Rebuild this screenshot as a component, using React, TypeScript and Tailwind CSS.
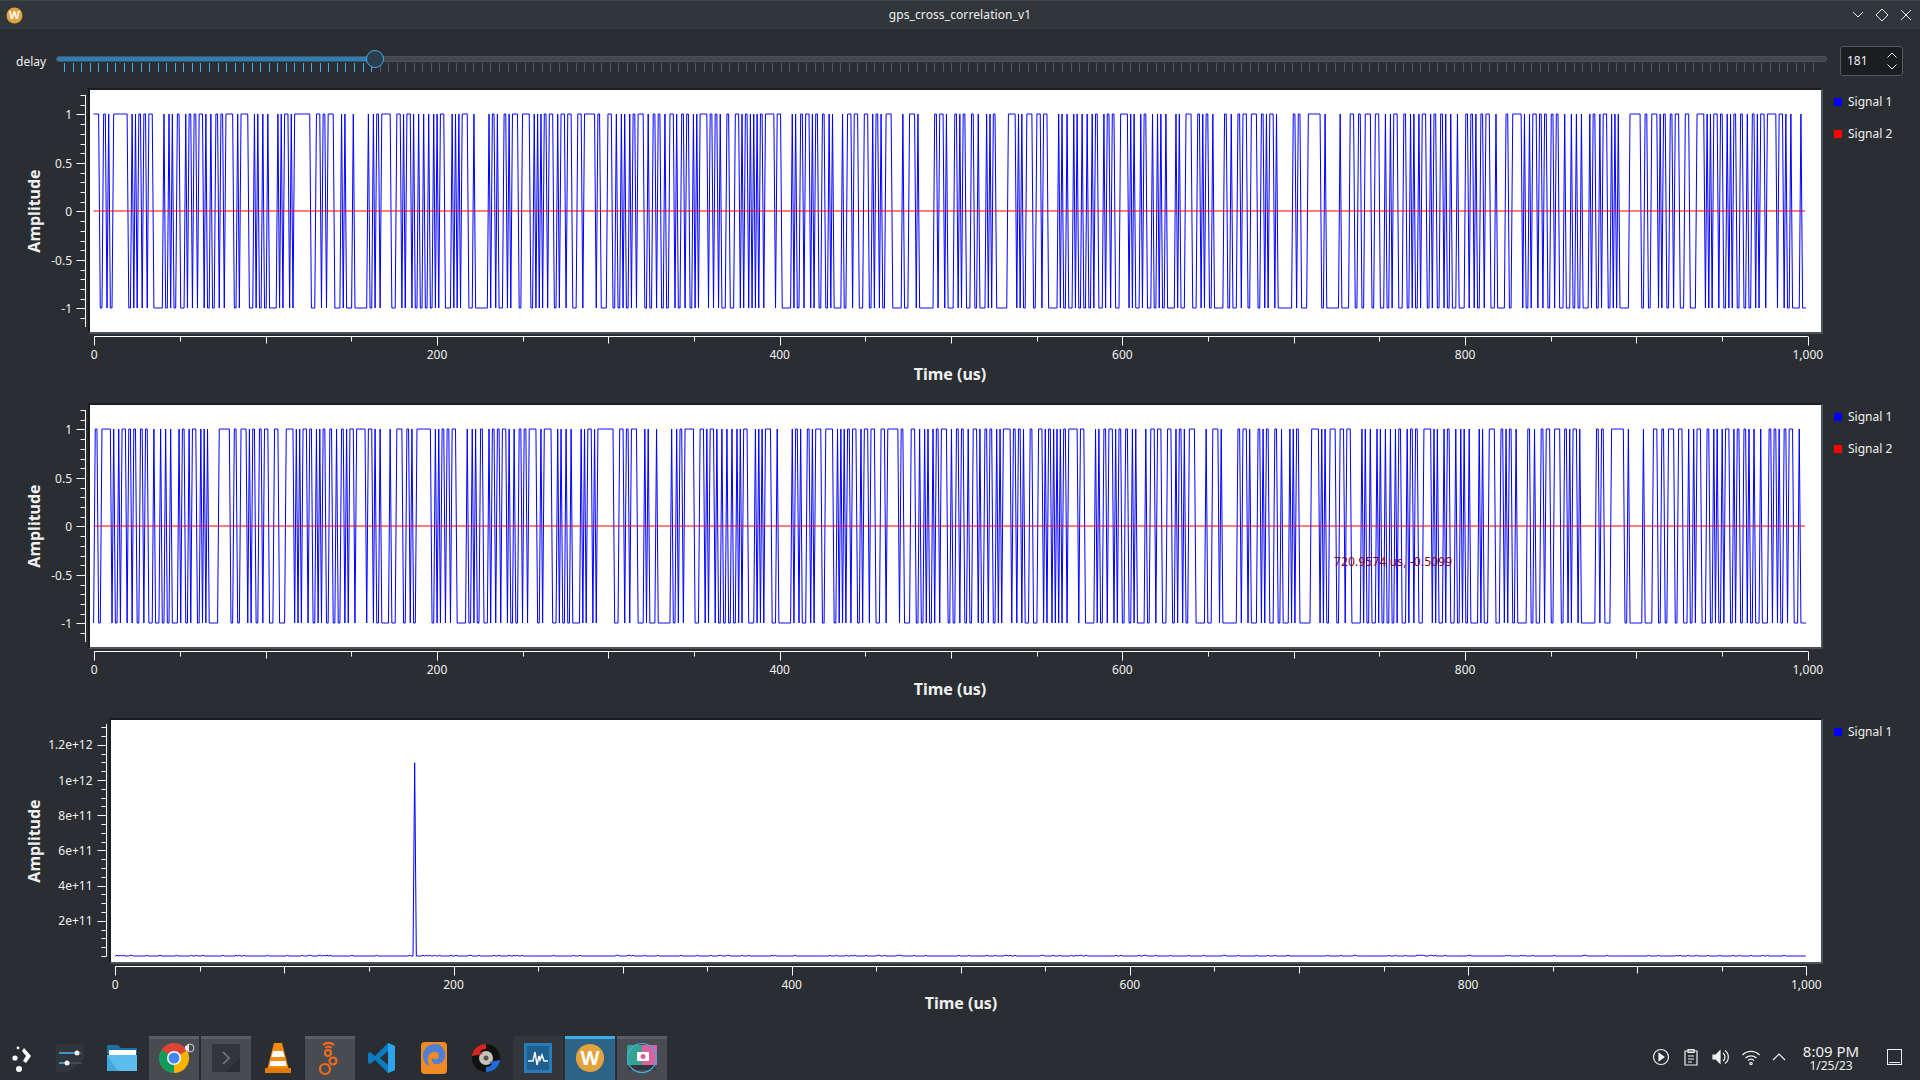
import type { ReactNode } from 'react';

// GPS C/A code for PRN 20 (G2 taps 4 and 7), one full 1023 chip period
function caCode(t1: number, t2: number) {
  let g1 = Array(10).fill(1) as number[];
  let g2 = Array(10).fill(1) as number[];
  const out: number[] = [];
  for (let i = 0; i < 1023; i++) {
    out.push(g1[9] ^ g2[t1 - 1] ^ g2[t2 - 1]);
    const f1 = g1[2] ^ g1[9];
    const f2 = g2[1] ^ g2[2] ^ g2[5] ^ g2[7] ^ g2[8] ^ g2[9];
    g1 = [f1, ...g1.slice(0, 9)];
    g2 = [f2, ...g2.slice(0, 9)];
  }
  return out;
}

const DELAY = 181;
const bits = caCode(4, 7);
const delayed = bits.map((_, i) => bits[(i - DELAY + 1023) % 1023]);

let seed = 7;
const rnd = () => {
  seed = (seed * 1664525 + 1013904223) >>> 0;
  return seed / 4294967296;
};

const toPoints = (b: number[]) =>
  b.map((v, i) => `${(3.6 + i * 1.6755).toFixed(2)},${v ? 24 : 218}`).join(' ');

const corrPoints = Array.from({ length: 1023 }, (_, i) => {
  const y = i === DELAY ? 42.8 : 236 + (rnd() > 0.85 ? -0.7 : 0);
  return `${(4.3 + i * 1.654).toFixed(2)},${y}`;
}).join(' ');

const range = (n: number) => Array.from({ length: n }, (_, i) => i);

function XAxis({ x0, pxPerUs, titleX, titleY }: { x0: number; pxPerUs: number; titleX: number; titleY: number }) {
  return (
    <svg width="100%" height={69} className="block">
      <line x1={x0} x2={x0 + 1000 * pxPerUs} y1={2.5} y2={2.5} stroke="#fff" />
      {range(21).map((i) => {
        const x = Math.round(x0 + i * 50 * pxPerUs) + 0.5;
        const len = i % 4 === 0 ? 9 : i % 2 === 0 ? 7 : 5;
        return <line key={i} x1={x} x2={x} y1={2.5} y2={2.5 + len} stroke="#fff" />;
      })}
      {range(6).map((i) => (
        <text key={i} x={x0 + i * 200 * pxPerUs} y={25} textAnchor="middle" fontSize={12} fill="#eff0f1">
          {i === 5 ? '1,000' : i * 200}
        </text>
      ))}
      <text x={titleX} y={titleY} textAnchor="middle" fontSize={16} fontWeight={700} fill="#eff0f1">
        Time (us)
      </text>
    </svg>
  );
}

function YAxis({
  width, axisX, top, bottom, labelX, ticks, minors,
}: {
  width: number; axisX: number; top: number; bottom: number; labelX: number;
  ticks: { y: number; label: string }[]; minors: number[];
}) {
  return (
    <svg width={width} height={246} className="block shrink-0">
      <line x1={axisX} x2={axisX} y1={top} y2={bottom} stroke="#fff" />
      {minors.map((y) => (
        <line key={y} x1={axisX - 5} x2={axisX} y1={Math.round(y) + 0.5} y2={Math.round(y) + 0.5} stroke="#fff" />
      ))}
      {ticks.map((t) => (
        <g key={t.label}>
          <line x1={axisX - 9} x2={axisX} y1={Math.round(t.y) + 0.5} y2={Math.round(t.y) + 0.5} stroke="#fff" />
          <text x={labelX} y={t.y + 4.5} textAnchor="end" fontSize={12} fill="#eff0f1">{t.label}</text>
        </g>
      ))}
      <text transform="translate(39.5 123) rotate(-90)" textAnchor="middle" fontSize={16} fontWeight={700} fill="#eff0f1">
        Amplitude
      </text>
    </svg>
  );
}

function Legend({ signals }: { signals: { name: string; color: string }[] }) {
  return (
    <ul className="flex w-[97px] shrink-0 flex-col gap-[16px] pt-[6px] pl-[11px] text-[12px] leading-[16px] text-[#eff0f1]">
      {signals.map((s) => (
        <li key={s.name} className="flex items-center gap-[6px]">
          <span className={`size-[8px] ${s.color}`} />
          {s.name}
        </li>
      ))}
    </ul>
  );
}

const ampTicks = [
  { y: 26, label: '1' }, { y: 75, label: '0.5' }, { y: 123, label: '0' }, { y: 172, label: '-0.5' }, { y: 220, label: '-1' },
];
const ampMinors = range(24).map((i) => 7 + i * 9.7).filter((y) => y < 239);

function SignalPlot({ data, children }: { data: number[]; children?: ReactNode }) {
  return (
    <section className="flex h-[315px]">
      <YAxis width={88} axisX={85.5} top={7} bottom={239} labelX={72} ticks={ampTicks} minors={ampMinors} />
      <div className="flex-1">
        <div className="relative h-[246px] border-2 border-t-[#1b1e20] border-r-[#4d5257] border-b-[#4d5257] border-l-[#1b1e20] bg-white">
          <svg width="100%" height="100%" className="block">
            <polyline points={toPoints(data)} fill="none" stroke="#0000ff" strokeWidth={1} />
            <line x1={3.6} x2={1715} y1={121} y2={121} stroke="#ff0000" strokeWidth={1} />
          </svg>
          {children}
        </div>
        <XAxis x0={6.3} pxPerUs={1.7135} titleX={862} titleY={46} />
      </div>
      <Legend signals={[{ name: 'Signal 1', color: 'bg-[#0000ff]' }, { name: 'Signal 2', color: 'bg-[#ff0000]' }]} />
    </section>
  );
}

function CorrelationPlot() {
  const ticks = ['2e+11', '4e+11', '6e+11', '8e+11', '1e+12', '1.2e+12'];
  return (
    <section className="flex h-[315px]">
      <YAxis
        width={109}
        axisX={106.5}
        top={6}
        bottom={238}
        labelX={92.5}
        ticks={ticks.map((label, i) => ({ y: 202.8 - i * 35.2, label }))}
        minors={range(27).map((i) => 238 - i * 8.8).filter((y) => y > 6)}
      />
      <div className="flex-1">
        <div className="h-[246px] border-2 border-t-[#1b1e20] border-r-[#4d5257] border-b-[#4d5257] border-l-[#1b1e20] bg-white">
          <svg width="100%" height="100%" className="block">
            <polyline points={corrPoints} fill="none" stroke="#0000ff" strokeWidth={1} />
          </svg>
        </div>
        <XAxis x0={6.3} pxPerUs={1.691} titleX={852} titleY={45} />
      </div>
      <Legend signals={[{ name: 'Signal 1', color: 'bg-[#0000ff]' }]} />
    </section>
  );
}

function Slider() {
  const ticks = range(206);
  return (
    <div className="relative h-[30px] flex-1">
      <div className="mt-[10px] flex h-[6px] overflow-hidden rounded-full border border-[#4d5257] bg-[#43474b]">
        <div className="h-full w-[319px] bg-[#2980b9]" />
      </div>
      <svg width="100%" height={9} className="mt-[1px] block">
        {ticks.map((i) => {
          const x = Math.round(8 + i * 8.53) + 0.5;
          return <line key={i} x1={x} x2={x} y1={0} y2={9} stroke={x < 319 ? '#3daee9' : '#54585c'} />;
        })}
      </svg>
      <span className="absolute top-[4px] left-[310px] size-[18px] rounded-full border border-[#3daee9] bg-[#2a3e4c]" />
    </div>
  );
}

function SpinBox() {
  return (
    <div className="ml-[13px] flex h-[30px] w-[63px] items-center justify-between rounded-[3px] border border-[#565a5e] bg-[#1b1e20] pr-[4px] pl-[6px] text-[12px] text-[#eff0f1]">
      181
      <svg width="12" height="22" viewBox="0 0 12 22" fill="none" stroke="#eff0f1">
        <path d="M1.500 7.500L6 3l4.500 4.500M1.500 14.500L6 19l4.500-4.500" />
      </svg>
    </div>
  );
}

function WLogo({ size }: { size: number }) {
  return (
    <svg width={size} height={size} viewBox="0 0 32 32">
      <circle cx="16" cy="16" r="15" fill="#e4a23c" />
      <text x="16" y="23.5" textAnchor="middle" fontSize="21" fontWeight="700" fill="#fff">W</text>
    </svg>
  );
}

const icons: { bg: string; icon: ReactNode; width?: string }[] = [
  {
    bg: '', width: 'w-[43px]',
    icon: (
      <svg width="28" height="28" viewBox="0 0 28 28" fill="#fff">
        <circle cx="7" cy="14" r="2.6" /><circle cx="10" cy="4" r="1.4" /><circle cx="11" cy="25" r="3" />
        <path d="M16 4l7 8-5 7-3-2 3-5-4-5z" />
      </svg>
    ),
  },
  {
    bg: '',
    icon: (
      <svg width="28" height="28" viewBox="0 0 28 28">
        <rect width="28" height="28" fill="#31363b" />
        <path d="M14 28L28 14v14z" fill="#2a2e32" />
        <path d="M3 9h23M3 19h23" stroke="#5a5e62" />
        <path d="M3 9h18M3 19h9" stroke="#3daee9" strokeWidth="1.5" />
        <circle cx="21" cy="9" r="2.5" fill="#eff0f1" /><circle cx="11" cy="19" r="2.5" fill="#eff0f1" />
      </svg>
    ),
  },
  {
    bg: '',
    icon: (
      <svg width="32" height="28" viewBox="0 0 32 28">
        <path d="M1 2a1 1 0 011-1h10l3 3h16v6H1z" fill="#1b6fa3" />
        <rect x="3" y="6" width="27" height="6" fill="#fff" />
        <path d="M1 11h30v16H1z" fill="#3fa9dd" />
        <path d="M1 11h30v16H12z" fill="#5cbcec" />
      </svg>
    ),
  },
  {
    bg: 'bg-[#484b4f] border-t-[#5a5d61]',
    icon: (
      <svg width="32" height="32" viewBox="-1 0 32 32" className="overflow-visible">
        <circle cx="15" cy="16" r="15" fill="#db4437" />
        <path d="M15 16L2 23.5A15 15 0 0 0 15 31z" fill="#0f9d58" />
        <path d="M2 23.5A15 15 0 0 1 2.5 8L15 16z" fill="#0f9d58" />
        <path d="M15 31a15 15 0 0 0 13-22.500L15 16z" fill="#f4b400" />
        <circle cx="15" cy="16" r="7" fill="#fff" /><circle cx="15" cy="16" r="5.500" fill="#4285f4" />
        <circle cx="31" cy="6" r="4" fill="none" stroke="#d0d0d0" /><path d="M26 4h2l2-2v8l-2-2h-2z" fill="#eee" />
      </svg>
    ),
  },
  {
    bg: 'bg-[#484b4f] border-t-[#5a5d61]',
    icon: (
      <svg width="28" height="28" viewBox="0 0 28 28">
        <rect width="28" height="28" fill="#31363b" />
        <path d="M14 28L28 14v14z" fill="#2a2e32" />
        <path d="M11 8l6 6-6 6" fill="none" stroke="#777b7f" strokeWidth="1.500" />
      </svg>
    ),
  },
  {
    bg: '',
    icon: (
      <svg width="26" height="32" viewBox="0 0 26 32">
        <path d="M9 1h8l7 27H2z" fill="#f48b12" />
        <path d="M8 9h10l1.500 6h-13zM5.500 19h15l1 5h-17z" fill="#fff" />
        <rect x="0" y="26" width="26" height="5" fill="#e27a08" />
      </svg>
    ),
  },
  {
    bg: 'bg-[#484b4f] border-t-[#5a5d61]',
    icon: (
      <svg width="24" height="36" viewBox="0 0 24 36" fill="none" stroke="#f26b1d" strokeWidth="2.200">
        <path d="M5 5a8 8 0 0 1 11 0M7.500 8a4 4 0 0 1 6 0" />
        <circle cx="10" cy="13" r="3" /><circle cx="15" cy="21" r="3.500" /><circle cx="7" cy="29" r="5" />
      </svg>
    ),
  },
  {
    bg: '',
    icon: (
      <svg width="28" height="32" viewBox="0 0 28 32">
        <path d="M20 1l7 3v24l-7 3L7 18l-5 4-2-1.500V11.500L2 10l5 4z" fill="#0a7cc1" />
        <path d="M20 1l7 3v24l-7 3z" fill="#2ba4ec" />
        <path d="M20 9l-8 7 8 7z" fill="#2a2e32" />
      </svg>
    ),
  },
  {
    bg: '',
    icon: (
      <svg width="26" height="32" viewBox="0 0 26 32">
        <rect width="26" height="32" rx="4" fill="#f08a24" />
        <path d="M16 2C7 1 2 7 2 14c0 5 3 9 7 10-2-3-3-6-2-9 1-4 5-6 8-5 3 1 4 5 1 7-2 1-4 0-5-1-1 4 2 7 6 6 5-1 8-6 7-11-1-5-4-8-8-9z" fill="#4f7fd6" />
      </svg>
    ),
  },
  {
    bg: '',
    icon: (
      <svg width="30" height="32" viewBox="0 0 30 32">
        <circle cx="15" cy="16" r="14" fill="#111" />
        <circle cx="15" cy="16" r="7" fill="#c9c4b8" /><circle cx="15" cy="16" r="2.500" fill="#555" />
        <path d="M1 13C3 6 8 2 15 2v5c-3 0-5 1-6 3l3 2-11 2z" fill="#d8251f" />
        <path d="M29 19c-2 7-7 11-14 11v-5c3 0 5-1 6-3l-3-2 11-2z" fill="#2469d8" />
      </svg>
    ),
  },
  {
    bg: 'bg-[#33363a]',
    icon: (
      <svg width="28" height="32" viewBox="0 0 28 32">
        <rect y="1" width="28" height="30" fill="#2a7ab8" />
        <rect x="3" y="4" width="22" height="24" fill="#1f5f8f" />
        <path d="M4 19h5l2-9 2 13 2-9 1 4 2-5 2 6h4" fill="none" stroke="#f4f6f8" strokeWidth="1.500" />
      </svg>
    ),
  },
  { bg: 'bg-[#2d6386] border-t-[#3daee9]', icon: <WLogo size={30} /> },
  {
    bg: 'bg-[#484b4f] border-t-[#5a5d61]',
    icon: (
      <svg width="32" height="32" viewBox="0 0 32 32">
        <rect x="1" y="3" width="30" height="20" fill="#37a18f" />
        <path d="M16 3h15v20H16z" fill="#d9629d" />
        <rect x="11" y="10" width="12" height="9" rx="1" fill="#fff" /><circle cx="17" cy="14.500" r="2.500" fill="#d9629d" />
        <path d="M4 23h24l2 5H2z" fill="#33363a" />
        <circle cx="16" cy="16" r="14.500" fill="none" stroke="#3daee9" strokeWidth="1.200" />
      </svg>
    ),
  },
];

function TrayIcon({ children }: { children: ReactNode }) {
  return (
    <span className="flex w-[30px] justify-center">
      <svg width="20" height="20" viewBox="0 0 20 20" fill="none" stroke="currentColor" strokeWidth="1.200">
        {children}
      </svg>
    </span>
  );
}

function Taskbar() {
  return (
    <footer className="flex h-[47px] items-end gap-[2px]">
      {icons.map((it, i) => (
        <div
          key={i}
          className={`flex h-[44px] items-center justify-center border-t-[3px] border-transparent pb-[3px] ${it.width ?? 'w-[50px]'} ${it.bg}`}
        >
          {it.icon}
        </div>
      ))}
      <div className="ml-auto flex h-[44px] items-center pb-[3px] text-[#eff0f1]">
        <TrayIcon>
          <circle cx="10" cy="10" r="7.500" /><path d="M8 6.500l5 3.500-5 3.500z" fill="currentColor" />
        </TrayIcon>
        <TrayIcon>
          <path d="M4 4h12v14H4zM7 2.500h6v3H7zM7 9h6M7 12h6M7 15h4" />
        </TrayIcon>
        <TrayIcon>
          <path d="M2 8h3l4-4v12l-4-4H2z" fill="currentColor" /><path d="M12 6a5 5 0 0 1 0 8M14 3.500a8 8 0 0 1 0 13" />
        </TrayIcon>
        <TrayIcon>
          <path d="M1.500 8a12 12 0 0 1 17 0M4.500 11a8 8 0 0 1 11 0M7 13.500a4 4 0 0 1 6 0" /><circle cx="10" cy="16.500" r="1.200" />
        </TrayIcon>
        <span className="-ml-[2px]">
          <TrayIcon>
            <path d="M4 13l6-6 6 6" />
          </TrayIcon>
        </span>
        <div className="ml-[6px] flex w-[62px] flex-col items-center pt-[1px] text-[#eff0f1]">
          <span className="text-[15px] leading-[16px]">8:09 PM</span>
          <span className="text-[12px] leading-[13px]">1/25/23</span>
        </div>
        <div className="mr-[18px] ml-[25px] flex h-[16px] w-[15px] items-end border border-[#eff0f1] p-[1px]">
          <span className="h-px w-full bg-[#eff0f1]" />
        </div>
      </div>
    </footer>
  );
}

export default function App() {
  return (
    <div className="flex h-[1080px] w-[1920px] flex-col overflow-hidden bg-[#2a2e32] font-['Noto_Sans',sans-serif]">
      <header className="relative flex h-[29px] items-center justify-between border-t border-[#3f4449] bg-[#31363b] px-[6px]">
        <WLogo size={17} />
        <span className="absolute inset-x-0 text-center text-[12px] tracking-[0.1px] text-[#eff0f1]">gps_cross_correlation_v1</span>
        <svg width="64" height="16" viewBox="0 0 64 16" fill="none" stroke="#eff0f1" className="relative">
          <path d="M3 5l5 5 5-5M32 2l6 6-6 6-6-6zM51 3l10 10M61 3L51 13" />
        </svg>
      </header>
      <div className="flex h-[59px] items-center pt-[7px] pr-[17px] pl-[16px] text-[12px] text-[#eff0f1]">
        <span className="w-[40px]">delay</span>
        <div className="-mt-[2px] flex flex-1 items-center">
          <Slider />
          <SpinBox />
        </div>
      </div>
      <SignalPlot data={bits} />
      <SignalPlot data={delayed}>
        <span className="absolute top-[149px] left-[1244px] text-[12px] leading-[16px] tracking-[0.15px] text-[#8b0000]">720.9574 us, -0.5099</span>
      </SignalPlot>
      <CorrelationPlot />
      <Taskbar />
    </div>
  );
}
